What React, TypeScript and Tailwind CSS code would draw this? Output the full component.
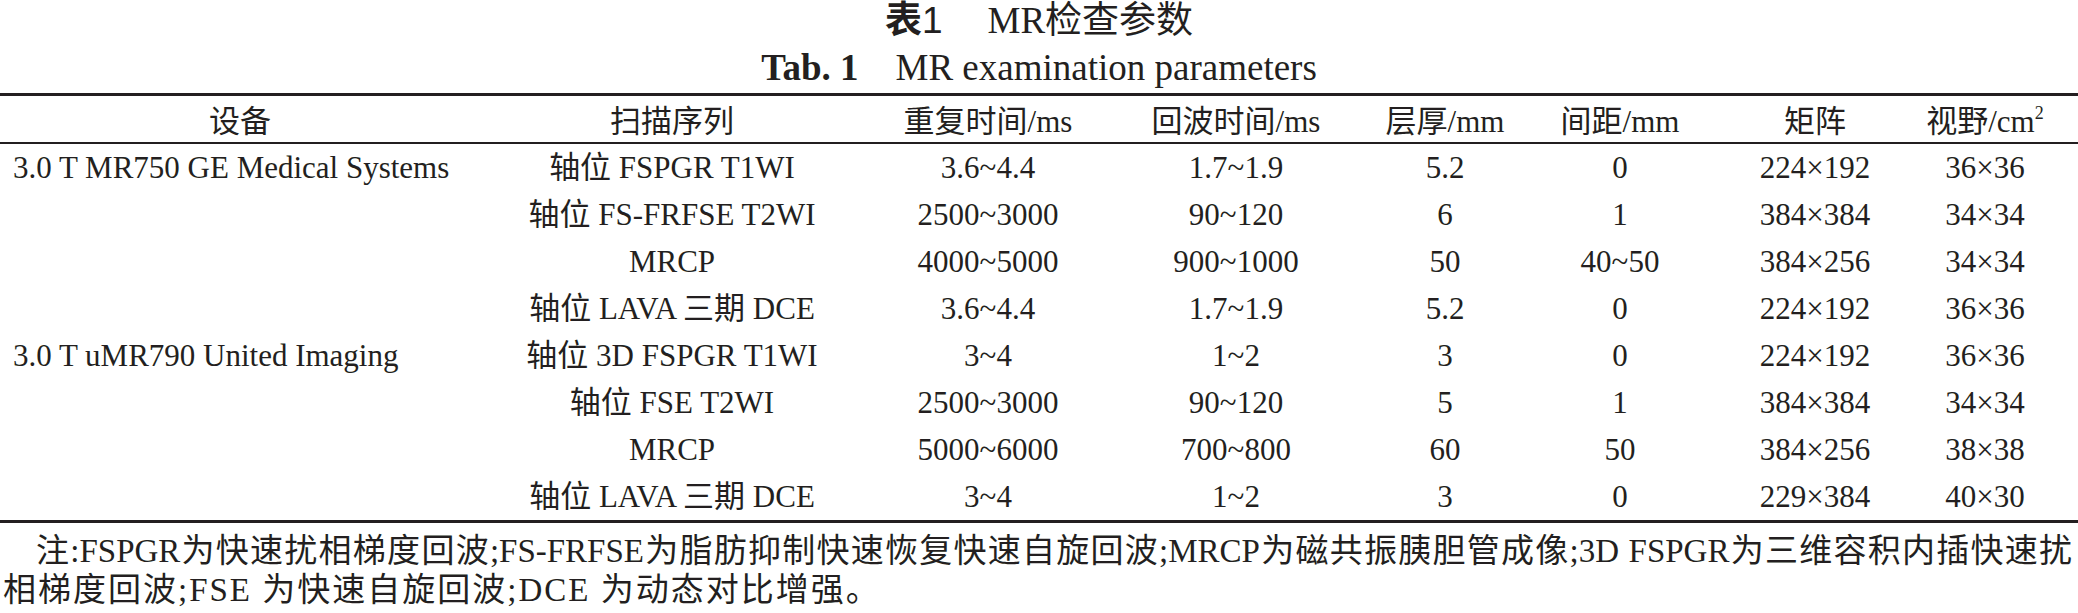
import type { ReactNode } from "react"

type Row = [string, string, string, string, string, string, string, string]

const rows: Row[] = [
  ["3.0 T MR750 GE Medical Systems", "轴位 FSPGR T1WI", "3.6~4.4", "1.7~1.9", "5.2", "0", "224×192", "36×36"],
  ["", "轴位 FS-FRFSE T2WI", "2500~3000", "90~120", "6", "1", "384×384", "34×34"],
  ["", "MRCP", "4000~5000", "900~1000", "50", "40~50", "384×256", "34×34"],
  ["", "轴位 LAVA 三期 DCE", "3.6~4.4", "1.7~1.9", "5.2", "0", "224×192", "36×36"],
  ["3.0 T uMR790 United Imaging", "轴位 3D FSPGR T1WI", "3~4", "1~2", "3", "0", "224×192", "36×36"],
  ["", "轴位 FSE T2WI", "2500~3000", "90~120", "5", "1", "384×384", "34×34"],
  ["", "MRCP", "5000~6000", "700~800", "60", "50", "384×256", "38×38"],
  ["", "轴位 LAVA 三期 DCE", "3~4", "1~2", "3", "0", "229×384", "40×30"],
]

const headers: ReactNode[] = [
  "设备",
  "扫描序列",
  "重复时间/ms",
  "回波时间/ms",
  "层厚/mm",
  "间距/mm",
  "矩阵",
  <>
    视野/cm<sup className="text-[18px]">2</sup>
  </>,
]

// column widths chosen so each centre lines up with the printed table
const grid = "grid grid-cols-[480px_384px_248px_248px_170px_180px_210px_130px]"

export default function App() {
  return (
    <div className="w-[2078px] h-[613px] overflow-hidden bg-white text-[#231f20] font-['Liberation_Serif','Noto_Sans_CJK_SC',serif]">
      <div className="h-[41px] flex items-center justify-center text-[37px] leading-none">
        <span className="font-['Liberation_Sans','Noto_Sans_CJK_SC',sans-serif]">
          <span className="font-bold">表</span>1
        </span>
        <span className="ml-[45px]">MR检查参数</span>
      </div>
      <div className="h-[52px] flex items-center justify-center text-[37px] leading-none">
        <span className="font-bold">Tab. 1</span>
        <span className="ml-[37px]">MR examination parameters</span>
      </div>

      <div className="h-[3px] bg-[#231f20]" />
      <div className={`${grid} h-[46px] pt-[5px] text-[31px] leading-none`}>
        {headers.map((h, i) => (
          <div key={i} className="flex items-center justify-center whitespace-nowrap">
            {h}
          </div>
        ))}
      </div>
      <div className="h-[1.5px] bg-[#231f20]" />

      {rows.map((r, ri) => (
        <div key={ri} className={`${grid} h-[47px] text-[31px] leading-none`}>
          {r.map((c, ci) => (
            <div
              key={ci}
              className={
                ci === 0
                  ? "flex items-center pl-[13px] whitespace-nowrap"
                  : "flex items-center justify-center whitespace-nowrap"
              }
            >
              {c}
            </div>
          ))}
        </div>
      ))}
      <div className="h-[3px] bg-[#231f20]" />

      <div className="pt-[9px] pr-[6px] pl-[3px] text-[33px] leading-[39px]">
        <p className="indent-[33px] text-justify [text-align-last:justify]">
          注:FSPGR为快速扰相梯度回波;FS-FRFSE为脂肪抑制快速恢复快速自旋回波;MRCP为磁共振胰胆管成像;3D FSPGR为三维容积内插快速扰
        </p>
        <p className="tracking-[2px]">相梯度回波;FSE 为快速自旋回波;DCE 为动态对比增强。</p>
      </div>
    </div>
  )
}
